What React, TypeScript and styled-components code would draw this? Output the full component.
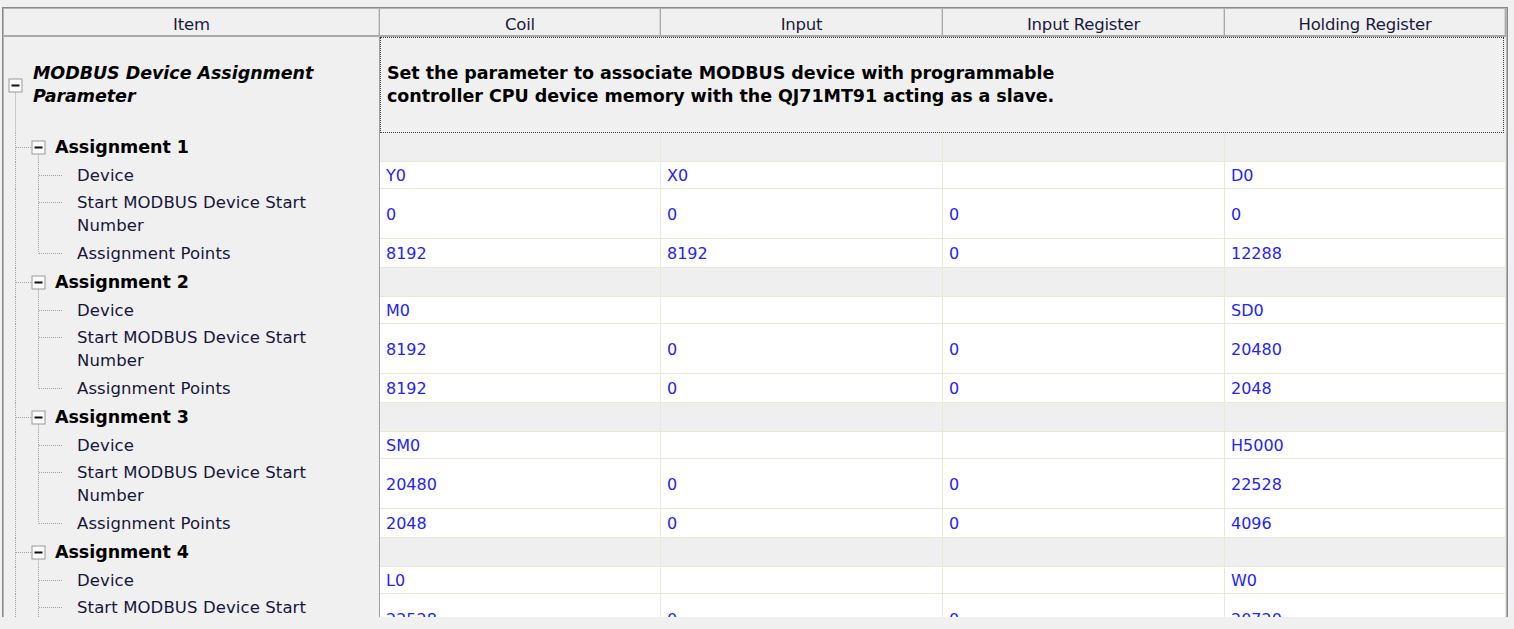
import styled, { createGlobalStyle } from "styled-components";

const GlobalStyle = createGlobalStyle`
    html, body {
        margin: 0;
        padding: 0;
        background: #f0f0f0;
    }
    * {
        box-sizing: border-box;
    }
`

const COLUMNS = "376px 281px 282px 282px 281px"
const FONT = `"DejaVu Sans", Tahoma, Verdana, sans-serif`

const Page = styled.div`
    height: 629px;
    padding: 7px 0 0 2px;
    background: #f0f0f0;
    font-family: ${FONT};
    font-size: 16px;
    overflow: hidden;
`

const Frame = styled.div`
    width: 1506px;
    height: 610px;
    border: 1px solid #8a8a8a;
    border-bottom: none;
    box-shadow: inset 1px 1px 0 #b4b4b4, inset -1px 0 0 #b4b4b4;
    padding: 1px 1px 0 1px;
    overflow: hidden;
    background: #f0f0f0;
`

const HeaderRow = styled.div`
    display: grid;
    grid-template-columns: ${COLUMNS};
    height: 28px;
    border-bottom: 2px solid #a9a9a9;
`

const HeaderCell = styled.div`
    display: flex;
    align-items: center;
    justify-content: center;
    color: #1a1a3c;
    font-size: 16.5px;
    letter-spacing: -0.2px;
    border-right: 1px solid #a9a9a9;
    box-shadow: inset -1px 0 0 #d6d6d6;
    padding-top: 4px;
`

const Row = styled.div<{ $h: number }>`
    display: grid;
    grid-template-columns: ${COLUMNS};
    height: ${p => p.$h}px;
`

const ItemCell = styled.div`
    display: flex;
    align-items: stretch;
    border-right: 1px solid #a0a0a0;
    background: #f0f0f0;
    color: #16163a;
`

const Guide = styled.svg`
    flex: none;
    display: block;
`

const Label = styled.div<{ $kind: "root" | "group" | "child" }>`
    display: flex;
    align-items: center;
    line-height: 23px;
    font-weight: ${p => (p.$kind === "child" ? 400 : 700)};
    font-style: ${p => (p.$kind === "root" ? "italic" : "normal")};
    color: ${p => (p.$kind === "child" ? "#16163a" : "#000")};
    font-size: ${p => (p.$kind === "child" ? "16.5px" : "17.5px")};
    letter-spacing: ${p => (p.$kind === "child" ? "0.1px" : "-0.05px")};
    padding-right: 40px;
`

const Description = styled.div`
    grid-column: 2 / span 4;
    border: 1px dotted #3c3c3c;
    margin-right: 2px;
    display: flex;
    align-items: center;
    padding: 0 6px 0;
    font-weight: 700;
    font-size: 17.5px;
    letter-spacing: -0.05px;
    line-height: 23px;
    color: #000;
`

const DataCell = styled.div<{ $group?: boolean }>`
    display: flex;
    align-items: center;
    padding: 1px 6px 0;
    font-size: 16px;
    background: ${p => (p.$group ? "#efefef" : "#ffffff")};
    border-right: 1px solid #ece8d6;
    border-bottom: 1px solid #ece8d6;
    color: #2323ff;
`

const DOT = "#a2a2a2"

function Dotted({ x1, y1, x2, y2 }: { x1: number; y1: number; x2: number; y2: number }) {
    return <line x1={x1} y1={y1} x2={x2} y2={y2} stroke={DOT} strokeWidth={1} strokeDasharray="1 1" />
}

function Expander({ cx, cy }: { cx: number; cy: number }) {
    return (
        <g>
            <rect x={cx - 6.5} y={cy - 6.5} width={13} height={13} fill="#fafafa" stroke="#9a9a9a" />
            <rect x={cx - 4} y={cy - 1} width={8} height={2} fill="#111" />
        </g>
    )
}

function RootGuide({ h }: { h: number }) {
    const cy = 48.5
    return (
        <Guide width={29} height={h}>
            <Dotted x1={11.5} y1={cy + 7} x2={11.5} y2={h} />
            <Expander cx={11.5} cy={cy} />
        </Guide>
    )
}

function GroupGuide({ h }: { h: number }) {
    const cy = 14.5
    return (
        <Guide width={51} height={h}>
            <Dotted x1={11.5} y1={0} x2={11.5} y2={h} />
            <Dotted x1={12} y1={cy} x2={28} y2={cy} />
            <Dotted x1={34.5} y1={cy + 7} x2={34.5} y2={h} />
            <Expander cx={34.5} cy={cy} />
        </Guide>
    )
}

function ChildGuide({ h, last, cy }: { h: number; last: boolean; cy: number }) {
    return (
        <Guide width={73} height={h}>
            <Dotted x1={11.5} y1={0} x2={11.5} y2={h} />
            <Dotted x1={34.5} y1={0} x2={34.5} y2={last ? cy : h} />
            <Dotted x1={35} y1={cy} x2={58} y2={cy} />
        </Guide>
    )
}

type Child = { label: string; values: string[]; h: number }

const groups: { name: string; rows: Child[] }[] = [
    {
        name: "Assignment 1",
        rows: [
            { label: "Device", values: ["Y0", "X0", "", "D0"], h: 27 },
            { label: "Start MODBUS Device Start Number", values: ["0", "0", "0", "0"], h: 50 },
            { label: "Assignment Points", values: ["8192", "8192", "0", "12288"], h: 29 },
        ],
    },
    {
        name: "Assignment 2",
        rows: [
            { label: "Device", values: ["M0", "", "", "SD0"], h: 27 },
            { label: "Start MODBUS Device Start Number", values: ["8192", "0", "0", "20480"], h: 50 },
            { label: "Assignment Points", values: ["8192", "0", "0", "2048"], h: 29 },
        ],
    },
    {
        name: "Assignment 3",
        rows: [
            { label: "Device", values: ["SM0", "", "", "H5000"], h: 27 },
            { label: "Start MODBUS Device Start Number", values: ["20480", "0", "0", "22528"], h: 50 },
            { label: "Assignment Points", values: ["2048", "0", "0", "4096"], h: 29 },
        ],
    },
    {
        name: "Assignment 4",
        rows: [
            { label: "Device", values: ["L0", "", "", "W0"], h: 27 },
            { label: "Start MODBUS Device Start Number", values: ["22528", "0", "0", "20720"], h: 50 },
            { label: "Assignment Points", values: ["2048", "0", "0", "4096"], h: 29 },
        ],
    },
]

const headers = ["Item", "Coil", "Input", "Input Register", "Holding Register"]

function App() {
    const rootH = 96
    const groupH = 29

    return (
        <Page>
            <GlobalStyle />
            <Frame>
                <HeaderRow>
                    {headers.map(h => (
                        <HeaderCell key={h}>{h}</HeaderCell>
                    ))}
                </HeaderRow>

                <Row $h={rootH}>
                    <ItemCell>
                        <RootGuide h={rootH} />
                        <Label $kind="root">MODBUS Device Assignment Parameter</Label>
                    </ItemCell>
                    <Description>
                        Set the parameter to associate MODBUS device with programmable
                        <br />
                        controller CPU device memory with the QJ71MT91 acting as a slave.
                    </Description>
                </Row>

                {groups.map(g => (
                    <div key={g.name}>
                        <Row $h={groupH}>
                            <ItemCell>
                                <GroupGuide h={groupH} />
                                <Label $kind="group">{g.name}</Label>
                            </ItemCell>
                            {[0, 1, 2, 3].map(i => (
                                <DataCell key={i} $group />
                            ))}
                        </Row>
                        {g.rows.map((r, idx) => (
                            <Row $h={r.h} key={r.label}>
                                <ItemCell>
                                    <ChildGuide h={r.h} last={idx === g.rows.length - 1} cy={r.h > 40 ? 13.5 : Math.floor(r.h / 2) + 0.5} />
                                    <Label $kind="child">{r.label}</Label>
                                </ItemCell>
                                {r.values.map((v, i) => (
                                    <DataCell key={i}>{v}</DataCell>
                                ))}
                            </Row>
                        ))}
                    </div>
                ))}
            </Frame>
        </Page>
    )
}

export default App;
